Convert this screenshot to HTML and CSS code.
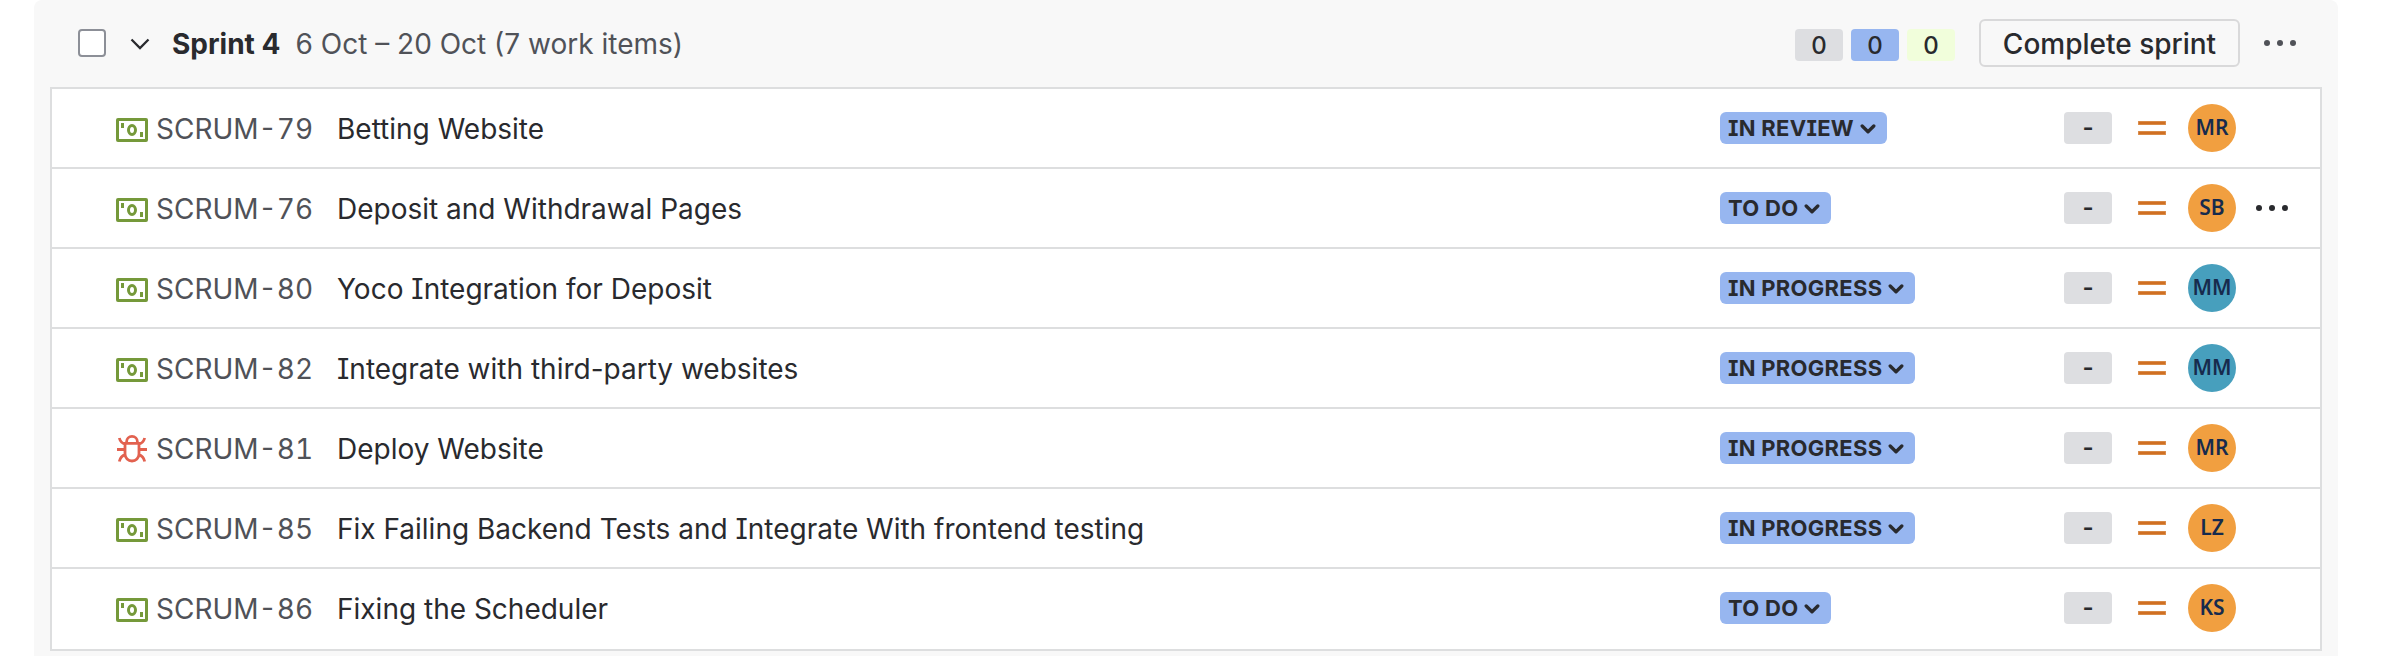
FILE: index.html
```html
<!DOCTYPE html>
<html lang="en">
<head>
<meta charset="utf-8">
<title>Sprint 4</title>
<link rel="stylesheet" href="styles.css">
</head>
<body>
<svg class="defs" width="0" height="0">
  <symbol id="cash" viewBox="0 0 32 24"><rect x="1.5" y="1.5" width="29" height="21" rx=".5" fill="none" stroke="#75993a" stroke-width="3"/><ellipse cx="16" cy="12" rx="3.5" ry="4.5" fill="none" stroke="#75993a" stroke-width="3"/><path d="M5 5h3v5H5zM24 14h3v5h-3z" fill="#75993a"/></symbol>
  <symbol id="bug" viewBox="0 0 32 28"><g fill="none" stroke="#e2614f" stroke-width="2.8"><path d="M9 8.4h14V19a7 7 0 0 1-14 0zM10.600 8V6.800a5.400 5.400 0 0 1 10.800 0V8M1 14.500h8M23 14.500h8M3.300 3c.8 3 2.700 5.400 6.200 6.400M28.700 3c-.8 3-2.700 5.400-6.200 6.400M3.300 26.500c.8-3.500 2.700-5.800 6.200-6.800M28.700 26.500c-.8-3.500-2.700-5.800-6.200-6.800"/></g></symbol>
  <symbol id="chev" viewBox="0 0 16 12"><path d="M2.200 3 8 8.700 13.800 3" fill="none" stroke="#292a2e" stroke-width="3.300" stroke-linecap="round" stroke-linejoin="round"/></symbol>
  <symbol id="prio" viewBox="0 0 28 14"><path d="M0 2h28M0 12h28" stroke="#dc9455" stroke-width="4"/><path d="M.8 2h26.400M.8 12h26.400" stroke="#d06f22" stroke-width="2.400"/></symbol>
  <symbol id="dots" viewBox="0 0 32 6"><circle cx="3" cy="3" r="3"/><circle cx="16" cy="3" r="3"/><circle cx="29" cy="3" r="3"/></symbol>
</svg>
<main class="sprint">
  <header class="head">
    <span class="check"></span>
    <svg class="toggle" viewBox="0 0 20 12"><path d="M1.500 1.500 10 10l8.500-8.500" fill="none" stroke="#292a2e" stroke-width="2.300"/></svg>
    <h1 class="name">Sprint 4</h1>
    <span class="dates">6 Oct – 20 Oct (7 work items)</span>
    <div class="counts"><span class="count grey">0</span><span class="count blue">0</span><span class="count lime">0</span></div>
    <button class="complete">Complete sprint</button>
    <svg class="dots soft"><use href="#dots"/></svg>
  </header>
  <section class="list">
    <div class="row"><svg class="type cash"><use href="#cash"/></svg><span class="key">SCRUM-79</span><span class="title">Betting Website</span><span class="state"><span class="pill">IN REVIEW<svg><use href="#chev"/></svg></span></span><span class="est">-</span><svg class="prio"><use href="#prio"/></svg><span class="face orange">MR</span></div>
    <div class="row"><svg class="type cash"><use href="#cash"/></svg><span class="key">SCRUM-76</span><span class="title">Deposit and Withdrawal Pages</span><span class="state"><span class="pill">TO DO<svg><use href="#chev"/></svg></span></span><span class="est">-</span><svg class="prio"><use href="#prio"/></svg><span class="face orange">SB</span><svg class="dots"><use href="#dots"/></svg></div>
    <div class="row"><svg class="type cash"><use href="#cash"/></svg><span class="key">SCRUM-80</span><span class="title">Yoco Integration for Deposit</span><span class="state"><span class="pill">IN PROGRESS<svg><use href="#chev"/></svg></span></span><span class="est">-</span><svg class="prio"><use href="#prio"/></svg><span class="face teal">MM</span></div>
    <div class="row"><svg class="type cash"><use href="#cash"/></svg><span class="key">SCRUM-82</span><span class="title">Integrate with third-party websites</span><span class="state"><span class="pill">IN PROGRESS<svg><use href="#chev"/></svg></span></span><span class="est">-</span><svg class="prio"><use href="#prio"/></svg><span class="face teal">MM</span></div>
    <div class="row"><svg class="type bug"><use href="#bug"/></svg><span class="key">SCRUM-81</span><span class="title">Deploy Website</span><span class="state"><span class="pill">IN PROGRESS<svg><use href="#chev"/></svg></span></span><span class="est">-</span><svg class="prio"><use href="#prio"/></svg><span class="face orange">MR</span></div>
    <div class="row"><svg class="type cash"><use href="#cash"/></svg><span class="key">SCRUM-85</span><span class="title">Fix Failing Backend Tests and Integrate With frontend testing</span><span class="state"><span class="pill">IN PROGRESS<svg><use href="#chev"/></svg></span></span><span class="est">-</span><svg class="prio"><use href="#prio"/></svg><span class="face orange">LZ</span></div>
    <div class="row"><svg class="type cash"><use href="#cash"/></svg><span class="key">SCRUM-86</span><span class="title">Fixing the Scheduler</span><span class="state"><span class="pill">TO DO<svg><use href="#chev"/></svg></span></span><span class="est">-</span><svg class="prio"><use href="#prio"/></svg><span class="face orange">KS</span></div>
  </section>
</main>
</body>
</html>
```

FILE: styles.css
```css
* { box-sizing: border-box; }
body { margin: 0; background: #fff; color: #292a2e; font: 400 28px/40px Inter, "Liberation Sans", sans-serif; font-feature-settings: "cv08"; overflow: hidden; }
.defs { position: absolute; }
svg { display: block; flex: none; }
.sprint { margin: 0 48px 0 34px; height: 656px; padding: 0 16px; background: #f8f8f8; border-radius: 8px 8px 0 0; }
.head { height: 87px; display: flex; align-items: center; padding: 0 26px 1px 28px; white-space: nowrap; }
.check { width: 28px; height: 28px; border: 2px solid #8c8f97; border-radius: 4px; background: #fff; }
.toggle { width: 20px; height: 12px; margin: 2px 0 0 24px; }
.name { margin: 0 0 0 22px; padding-top: 2px; width: 123.5px; font-size: 28px; line-height: 40px; font-weight: 680; }
.dates { color: #505258; flex: 1; padding-top: 2px; }
.counts { display: flex; gap: 8px; margin-top: 4px; }
.count { width: 48px; height: 32px; border-radius: 4px; font-size: 24px; line-height: 33px; text-align: center; font-weight: 450; }
.grey, .est { background: #dddee1; }
.blue { background: #97b6f0; }
.lime { background: #f1fedb; }
.complete { margin-left: 24px; width: 261px; height: 48px; padding: 2px 0 0; border: 2px solid #d9d9da; border-radius: 6px; background: transparent; color: #292a2e; font: 500 28px/40px Inter, sans-serif; }
.dots { width: 32px; height: 6px; margin-left: 17px; fill: #292a2e; }
.head .dots { margin-left: 24px; }
.soft { fill: #505258; }
.list { border: 2px solid #dddedf; background: #fff; }
.row { height: 80px; display: grid; grid-template-columns: 40px 181px 1383px 344px 74px 50px 51px 1fr; align-items: center; border-bottom: 2px solid #dddedf; padding-left: 64px; white-space: nowrap; }
.row:last-child { border-bottom: 0; padding-bottom: 2px; }
.type { width: 32px; height: 24px; margin-top: 4px; }
.bug { height: 28px; margin-top: 1px; }
.key { color: #505258; font-variant-numeric: tabular-nums; padding-top: 1px; }
.title { padding-top: 1px; }
.pill { display: inline-flex; align-items: center; height: 32px; padding: 0 11px 0 8px; border-radius: 6px; background: #97b6f0; font-size: 22px; line-height: 32px; font-weight: 700; letter-spacing: .28px; }
.state { display: flex; }
.pill svg { width: 16px; height: 12px; margin: 1px 0 0 6px; }
.est { width: 48px; height: 32px; border-radius: 4px; font-size: 24px; line-height: 32px; text-align: center; font-weight: 600; }
.prio { width: 28px; height: 14px; }
.face { width: 48px; height: 48px; border-radius: 50%; font: 600 21px/47px "Noto Sans", sans-serif; text-align: center; color: #172b4d; }
.orange { background: #f19f40; }
.teal { background: #479fbd; }
```
